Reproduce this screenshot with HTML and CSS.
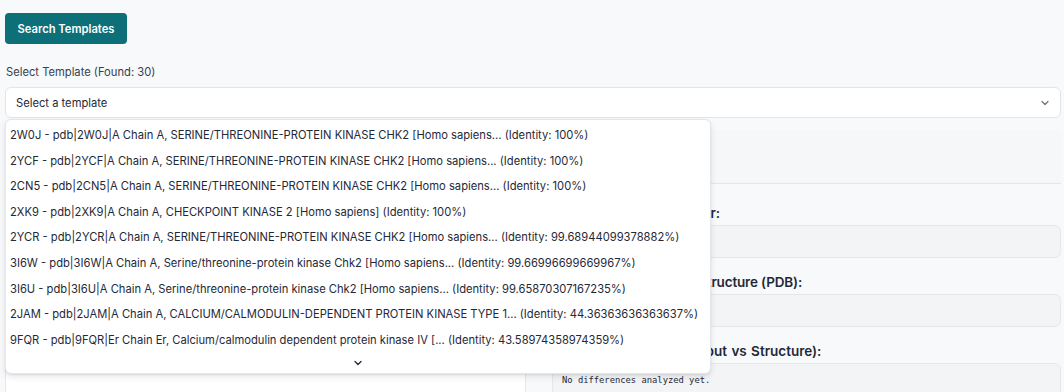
FILE: index.html
```html
<!DOCTYPE html>
<html>
<head>
<meta charset="utf-8">
<link rel="stylesheet" href="styles.css">
</head>
<body>
<div class="page">
  <button class="btn">Search Templates</button>
  <div class="field-label">Select Template (Found: 30)</div>
  <div class="select-wrap">
    <div class="select">
      <span>Select a template</span>
      <svg class="chev" width="10" height="10" viewBox="0 0 10 10"><path d="M2 3.5 L5 6.5 L8 3.5" fill="none" stroke="#6b7280" stroke-width="1.2" stroke-linecap="round" stroke-linejoin="round"/></svg>
    </div>
    <div class="dropdown">
      <div class="opt">2W0J - pdb|2W0J|A Chain A, SERINE/THREONINE-PROTEIN KINASE CHK2 [Homo sapiens... (Identity: 100%)</div>
      <div class="opt">2YCF - pdb|2YCF|A Chain A, SERINE/THREONINE-PROTEIN KINASE CHK2 [Homo sapiens... (Identity: 100%)</div>
      <div class="opt">2CN5 - pdb|2CN5|A Chain A, SERINE/THREONINE-PROTEIN KINASE CHK2 [Homo sapiens... (Identity: 100%)</div>
      <div class="opt">2XK9 - pdb|2XK9|A Chain A, CHECKPOINT KINASE 2 [Homo sapiens] (Identity: 100%)</div>
      <div class="opt">2YCR - pdb|2YCR|A Chain A, SERINE/THREONINE-PROTEIN KINASE CHK2 [Homo sapiens... (Identity: 99.68944099378882%)</div>
      <div class="opt">3I6W - pdb|3I6W|A Chain A, Serine/threonine-protein kinase Chk2 [Homo sapiens... (Identity: 99.66996699669967%)</div>
      <div class="opt">3I6U - pdb|3I6U|A Chain A, Serine/threonine-protein kinase Chk2 [Homo sapiens... (Identity: 99.65870307167235%)</div>
      <div class="opt">2JAM - pdb|2JAM|A Chain A, CALCIUM/CALMODULIN-DEPENDENT PROTEIN KINASE TYPE 1... (Identity: 44.36363636363637%)</div>
      <div class="opt">9FQR - pdb|9FQR|Er Chain Er, Calcium/calmodulin dependent protein kinase IV [... (Identity: 43.58974358974359%)</div>
      <div class="more">
        <svg width="10" height="10" viewBox="0 0 10 10"><path d="M2 3.5 L5 6.5 L8 3.5" fill="none" stroke="#1f2937" stroke-width="1.3" stroke-linecap="round" stroke-linejoin="round"/></svg>
      </div>
    </div>
  </div>
  <div class="columns">
    <div class="left-card"></div>
    <div class="right-col">
      <div class="right-head"></div>
      <div class="field">
        <div class="flabel">Template Chain Identifier:</div>
        <div class="fbox"></div>
      </div>
      <div class="field">
        <div class="flabel tight">Template Sequence of Structure (PDB):</div>
        <div class="fbox"></div>
      </div>
      <div class="field">
        <div class="flabel loose">Residue Differences (Input vs Structure):</div>
        <div class="fbox mono">No differences analyzed yet.</div>
      </div>
    </div>
  </div>
</div>
</body>
</html>
```

FILE: styles.css
```css
* { box-sizing: border-box; }
html, body { margin: 0; padding: 0; }
body {
  background: #f8f9fb;
  font-family: Inter, "Noto Sans", sans-serif;
  color: #1f2937;
  overflow: hidden;
  height: 392px;
}
.page {
  padding: 13px 3px 0 5px;
}
.btn {
  display: block;
  height: 31px;
  width: 122px;
  background: #0d6f78;
  color: #fff;
  border: none;
  border-radius: 4px;
  font-family: Inter, sans-serif;
  font-weight: 600;
  font-size: 11.2px;
  padding: 0;
}
.field-label {
  margin-top: 21px;
  font-size: 11.2px;
  color: #374151;
  line-height: 14px;
  padding-left: 1px;
}
.select-wrap {
  position: relative;
  margin-top: 8px;
}
.select {
  height: 31px;
  background: #fff;
  border: 1px solid #e2e5ea;
  border-radius: 6px;
  display: flex;
  align-items: center;
  justify-content: space-between;
  padding: 0 10px 0 10px;
  font-size: 11.2px;
  color: #1f2937;
}
.chev { margin-top: 1px; }
.dropdown {
  position: absolute;
  top: 32px;
  left: 0;
  width: 706px;
  height: 255px;
  background: #fff;
  border: 1px solid #e3e6eb;
  border-radius: 6px;
  box-shadow: 0 3px 6px rgba(0,0,0,0.10), 0 1px 2px rgba(0,0,0,0.06);
  padding: 3px 0 0 4px;
  z-index: 5;
}
.opt {
  height: 25.6px;
  line-height: 25.6px;
  font-size: 11.2px;
  white-space: nowrap;
  color: #1f2937;
}
.more {
  display: flex;
  justify-content: center;
  padding-top: 5px;
  padding-right: 4px;
}
.columns {
  display: grid;
  grid-template-columns: 521px 1fr;
  column-gap: 26px;
  margin-top: 12px;
}
.left-card {
  background: #fff;
  border: 1px solid #e5e7eb;
  border-radius: 6px;
  height: 300px;
}
.right-col {
  display: flex;
  flex-direction: column;
}
.right-head {
  height: 54px;
  border-bottom: 1px solid #e3e6eb;
  background: #f6f7f9;
}
.field {
  margin-top: 21px;
}
.field + .field { margin-top: 16px; }
.flabel {
  font-size: 13.5px;
  font-weight: 600;
  color: #1f2937;
  line-height: 16px;
  white-space: nowrap;
}
.flabel.tight { letter-spacing: -0.16px; }
.flabel.loose { word-spacing: 1px; }
.fbox {
  margin-top: 4px;
  height: 33px;
  background: #f3f4f6;
  border: 1px solid #e5e7eb;
  border-radius: 6px;
}
.mono {
  font-family: "DejaVu Sans Mono", "Liberation Mono", monospace;
  font-size: 8.8px;
  line-height: 10px;
  padding: 11px 9px 0;
  color: #1f2937;
}
```
